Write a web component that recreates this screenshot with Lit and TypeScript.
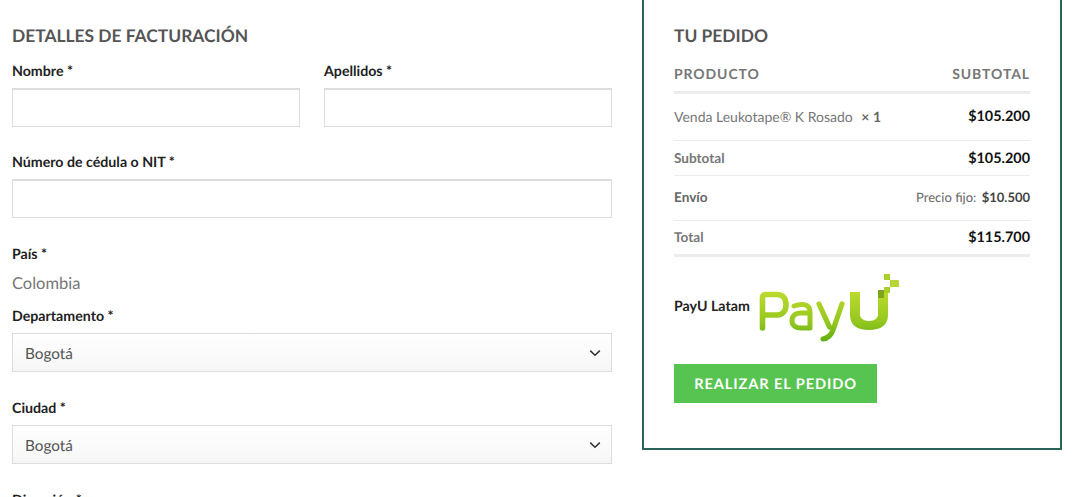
import { LitElement, html, css } from "lit";
import { customElement } from "lit/decorators.js";

@customElement("app-root")
export class AppRoot extends LitElement {
  static styles = css`
    :host { display: block; height: 497px; overflow: hidden; background: #fff; font-family: Lato, sans-serif; color: #222; text-rendering: geometricPrecision; }
    .page { display: flex; align-items: flex-start; gap: 30px; padding-left: 12px; }
    .billing { width: 600px; flex: none; padding-top: 26px; }
    h3 { margin: 0; font-size: 17.4px; line-height: 20px; font-weight: 700; color: #555; }
    .billing h3 { margin-bottom: 16px; }
    .row { display: flex; gap: 24px; }
    .row .field { margin-bottom: 26px; }
    .field { flex: 1; min-width: 0; margin-bottom: 27px; }
    .field.country { margin-bottom: 14px; }
    label { display: block; font-size: 14.2px; line-height: 18px; font-weight: 700; color: #222; padding-top: 1px; margin-bottom: 7px; }
    .input { height: 39px; box-sizing: border-box; border: 1px solid #ddd; border-top-width: 2px; background: #fff; }
    .country-name { font-size: 16.5px; line-height: 20px; color: #777; margin-top: 9px; }
    .select { height: 39px; box-sizing: border-box; border: 1px solid #ddd; background: linear-gradient(#fff, #f6f6f6); display: flex; align-items: center; justify-content: space-between; padding: 2px 10px 0 12px; font-size: 15.3px; color: #555; }
    .select svg { display: block; margin-top: -2px; }
    .order { width: 420px; height: 450px; flex: none; box-sizing: border-box; border: 2px solid #2a6359; border-top: 0; padding: 26px 30px 0; }
    table { width: 100%; border-collapse: collapse; margin-top: 9px; }
    th { font-size: 14px; line-height: 18px; font-weight: 700; letter-spacing: 0.9px; color: #777; text-align: left; padding: 10px 0 8px; border-bottom: 3px solid #ececec; }
    td { font-size: 14px; padding: 0; border-bottom: 1px solid #ececec; text-align: left; color: #777; height: 34px; }
    td.num { text-align: right; font-size: 14.4px; font-weight: 700; color: #111; }
    tr.item td { height: 44px; padding-bottom: 2px; }
    tr.ship td { height: 42px; padding-bottom: 2px; }
    tr.total td { height: 33px; border-bottom: 3px solid #ececec; }
    tfoot td:first-child { font-size: 13.6px; font-weight: 700; color: #777; }
    tfoot tr.ship td:first-child { color: #666; }
    tfoot tr.total td:first-child { height: 32px; padding-bottom: 1px; }
    .qty { font-weight: 700; color: #666; margin-left: 5px; }
    .fixed { font-size: 13px; font-weight: 400; color: #666; }
    .fixed b { font-weight: 700; color: #444; margin-left: 2px; }
    .pay { display: flex; align-items: center; gap: 8px; margin-top: 13px; height: 72px; font-size: 14.2px; font-weight: 700; color: #222; }
    .pay svg { display: block; flex: none; }
    .btn { display: block; margin-top: 22px; border: 0; width: 203px; height: 39px; padding: 2px 0 0; text-align: center; background: #57c451; color: #fff; font: 700 14.6px/37px Lato, sans-serif; letter-spacing: 0.9px; text-rendering: geometricPrecision; }
  `;

  private chevron() {
    return html`<svg width="12" height="8" viewBox="0 0 12 8"><path d="M1.2 1.6 6 6.2l4.8-4.6" fill="none" stroke="#333" stroke-width="1.5"/></svg>`;
  }

  render() {
    return html`
      <div class="page">
        <section class="billing">
          <h3>DETALLES DE FACTURACIÓN</h3>
          <div class="row">
            <div class="field"><label>Nombre *</label><div class="input"></div></div>
            <div class="field"><label>Apellidos *</label><div class="input"></div></div>
          </div>
          <div class="field"><label>Número de cédula o NIT *</label><div class="input"></div></div>
          <div class="field country"><label>País *</label><div class="country-name">Colombia</div></div>
          <div class="field"><label>Departamento *</label><div class="select">Bogotá ${this.chevron()}</div></div>
          <div class="field"><label>Ciudad *</label><div class="select">Bogotá ${this.chevron()}</div></div>
          <div class="field"><label>Dirección *</label><div class="input"></div></div>
        </section>
        <aside class="order">
          <h3>TU PEDIDO</h3>
          <table>
            <thead><tr><th>PRODUCTO</th><th style="text-align:right">SUBTOTAL</th></tr></thead>
            <tbody>
              <tr class="item"><td>Venda Leukotape® K Rosado <span class="qty">× 1</span></td><td class="num">$105.200</td></tr>
            </tbody>
            <tfoot>
              <tr><td>Subtotal</td><td class="num">$105.200</td></tr>
              <tr class="ship"><td>Envío</td><td class="num"><span class="fixed">Precio fijo: <b>$10.500</b></span></td></tr>
              <tr class="total"><td>Total</td><td class="num">$115.700</td></tr>
            </tfoot>
          </table>
          <div class="pay">
            <span>PayU Latam</span>
            <svg width="144" height="72" viewBox="0 0 144 72">
              <defs>
                <linearGradient id="g" gradientUnits="userSpaceOnUse" x1="0" y1="20" x2="0" y2="72">
                  <stop offset="0" stop-color="#bedb2e"/><stop offset="0.6" stop-color="#96c81f"/><stop offset="1" stop-color="#5fae14"/>
                </linearGradient>
              </defs>
              <g fill="none" stroke="url(#g)" stroke-linecap="round" stroke-linejoin="round">
                <path stroke-width="5.6" d="M4.5 58V28q0-3.500 3.500-3.500H19c6 0 9 4 9 10s-3 10.500-9 10.500H4.500"/>
                <path stroke-width="5" d="M36 36c3-1 6-1.500 8-1.500 6 0 8 3 8 8V58H43c-6 0-9-3-9-7.500s3-7.500 9-7.500h9"/>
                <path stroke-width="5.200" d="M61 34l10.500 23M84 34l-9 26q-3 8-10 9"/>
              </g>
              <path d="M92 22h10v22c0 4 3 7 9 7s9-3 9-7V22h10v23c0 10-7 15-19 15s-19-5-19-15z" fill="url(#g)"/>
              <rect x="126" y="4" width="6" height="6" fill="#a9cf2a"/>
              <rect x="132" y="10" width="9" height="7" fill="#b5d636"/>
              <rect x="126" y="17" width="6" height="6" fill="#a9cf2a"/>
              <rect x="120" y="20" width="6" height="8" fill="#7fa51c"/>
            </svg>
          </div>
          <button class="btn">REALIZAR EL PEDIDO</button>
        </aside>
      </div>
    `;
  }
}
